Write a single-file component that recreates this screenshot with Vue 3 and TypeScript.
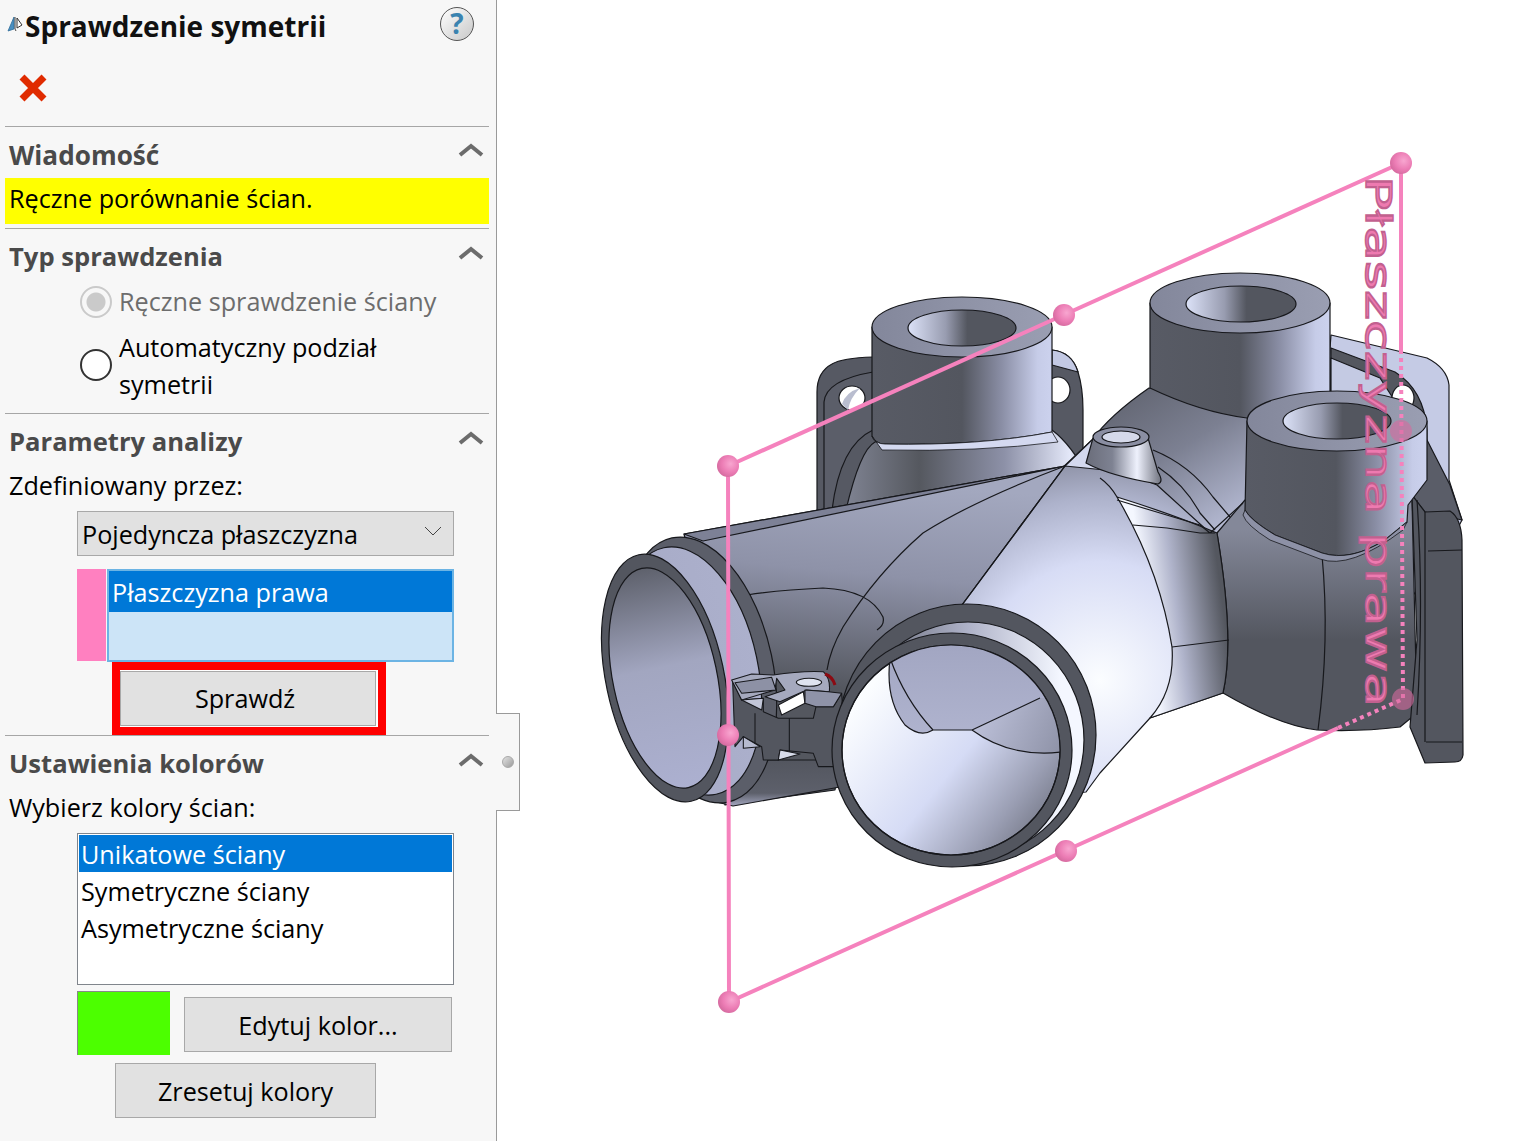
<template>
  <div class="app">
    <aside class="panel">
      <div class="head">
        <div class="title-row">
          <svg class="title-icon" viewBox="0 0 16 16" width="16" height="16">
            <path d="M7 1 L1 15 L7 13 Z" fill="#4a8fc0" stroke="#2e6c99" stroke-width="0.8" />
            <path d="M8 1 L8 13 L9 15" fill="none" stroke="#444" stroke-width="1" />
            <path d="M10 2 L15 9 L10 12 Z" fill="#fff" stroke="#333" stroke-width="1" />
          </svg>
          <h1 class="title">Sprawdzenie symetrii</h1>
          <span class="help">?</span>
        </div>
        <svg class="cancel" viewBox="0 0 28 28" width="28" height="28">
          <path d="M3 3 L25 25 M25 3 L3 25" stroke="#e02b00" stroke-width="7" />
        </svg>
      </div>

      <section class="sec">
        <div class="sec-head sec-head-a">
          <span>Wiadomość</span>
          <svg class="chev" viewBox="0 0 26 14" width="26" height="14"><path d="M2 12 L13 3 L24 12" /></svg>
        </div>
        <div class="msg">Ręczne porównanie ścian.</div>
      </section>

      <section class="sec sec-type">
        <div class="sec-head">
          <span>Typ sprawdzenia</span>
          <svg class="chev" viewBox="0 0 26 14" width="26" height="14"><path d="M2 12 L13 3 L24 12" /></svg>
        </div>
        <div class="radio-row disabled">
          <span class="radio on"></span>
          <span>Ręczne sprawdzenie ściany</span>
        </div>
        <div class="radio-row two">
          <span class="radio"></span>
          <span>Automatyczny podział<br />symetrii</span>
        </div>
      </section>

      <section class="sec">
        <div class="sec-head">
          <span>Parametry analizy</span>
          <svg class="chev" viewBox="0 0 26 14" width="26" height="14"><path d="M2 12 L13 3 L24 12" /></svg>
        </div>
        <div class="label">Zdefiniowany przez:</div>
        <div class="select">
          <span>Pojedyncza płaszczyzna</span>
          <svg viewBox="0 0 18 10" width="18" height="10"><path d="M1 1 L9 9 L17 1" fill="none" stroke="#444" stroke-width="1" /></svg>
        </div>
        <div class="plane-row">
          <div class="swatch-pink"></div>
          <div class="plane-list"><div class="plane-sel">Płaszczyzna prawa</div></div>
        </div>
        <div class="red-frame"><button class="btn btn-check">Sprawdź</button></div>
      </section>

      <section class="sec">
        <div class="sec-head">
          <span>Ustawienia kolorów</span>
          <svg class="chev" viewBox="0 0 26 14" width="26" height="14"><path d="M2 12 L13 3 L24 12" /></svg>
        </div>
        <div class="label">Wybierz kolory ścian:</div>
        <ul class="color-list">
          <li v-for="(item, i) in faceKinds" :key="item" :class="{ sel: i === 0 }">{{ item }}</li>
        </ul>
        <div class="color-row">
          <div class="swatch-green"></div>
          <button class="btn btn-edit">Edytuj kolor...</button>
        </div>
        <button class="btn btn-reset">Zresetuj kolory</button>
      </section>

      <div class="tab"><span class="tab-dot"></span></div>
    </aside>

    <main class="stage">
      <svg class="model" viewBox="497 0 1024 1141" width="1024" height="1141">
        <defs>
          <linearGradient id="cyl" x1="0" x2="1" y1="0" y2="0">
            <stop offset="0" stop-color="#585b65" />
            <stop offset="0.5" stop-color="#53565f" />
            <stop offset="0.72" stop-color="#8a8ea5" />
            <stop offset="0.92" stop-color="#c6cce8" />
            <stop offset="1" stop-color="#ccd2ee" />
          </linearGradient>
          <linearGradient id="face" x1="0" x2="1" y1="0" y2="0">
            <stop offset="0" stop-color="#83879b" />
            <stop offset="1" stop-color="#9a9eb2" />
          </linearGradient>
          <linearGradient id="hole" x1="0" x2="1" y1="0" y2="0">
            <stop offset="0" stop-color="#dce2f8" />
            <stop offset="0.35" stop-color="#989cb0" />
            <stop offset="0.55" stop-color="#53565f" />
            <stop offset="1" stop-color="#53565f" />
          </linearGradient>
          <linearGradient id="bulge" x1="0" x2="1" y1="0" y2="0">
            <stop offset="0" stop-color="#7f8392" />
            <stop offset="0.3" stop-color="#55585f" />
            <stop offset="0.65" stop-color="#8d91a8" />
            <stop offset="0.92" stop-color="#e4e8f9" />
            <stop offset="1" stop-color="#8d91a8" />
          </linearGradient>
          <linearGradient id="backBody" x1="0" x2="1" y1="0" y2="1">
            <stop offset="0" stop-color="#565963" />
            <stop offset="0.45" stop-color="#7c8092" />
            <stop offset="0.8" stop-color="#b4b9d2" />
            <stop offset="1" stop-color="#d0d5ea" />
          </linearGradient>
          <linearGradient id="trunk" gradientUnits="userSpaceOnUse" x1="880" y1="480" x2="860" y2="690">
            <stop offset="0" stop-color="#a3a8bf" />
            <stop offset="0.45" stop-color="#8e92a8" />
            <stop offset="1" stop-color="#54575f" />
          </linearGradient>
          <radialGradient id="shell" gradientUnits="userSpaceOnUse" cx="1100" cy="680" r="215">
            <stop offset="0" stop-color="#fbfdff" />
            <stop offset="0.55" stop-color="#d7dcf5" />
            <stop offset="0.85" stop-color="#adb2cb" />
            <stop offset="1" stop-color="#9296ab" />
          </radialGradient>
          <linearGradient id="shoulder" gradientUnits="userSpaceOnUse" x1="1150" y1="640" x2="1226" y2="630">
            <stop offset="0" stop-color="#f4f7ff" />
            <stop offset="0.4" stop-color="#b0b4cb" />
            <stop offset="1" stop-color="#54575f" />
          </linearGradient>
          <linearGradient id="lobe" gradientUnits="userSpaceOnUse" x1="1290" y1="530" x2="1290" y2="640">
            <stop offset="0" stop-color="#848899" />
            <stop offset="1" stop-color="#53565f" />
          </linearGradient>
          <linearGradient id="lowerTube" x1="0" x2="0" y1="0" y2="1">
            <stop offset="0" stop-color="#53565f" />
            <stop offset="0.72" stop-color="#5d606b" />
            <stop offset="1" stop-color="#a3a7bf" />
          </linearGradient>
          <linearGradient id="innerLeft" x1="0" x2="0" y1="0" y2="1">
            <stop offset="0" stop-color="#5e616c" />
            <stop offset="0.45" stop-color="#a2a6c0" />
            <stop offset="1" stop-color="#acb0d0" />
          </linearGradient>
          <linearGradient id="band" x1="0" x2="1" y1="0" y2="0">
            <stop offset="0" stop-color="#a6aac6" />
            <stop offset="1" stop-color="#acb0cc" />
          </linearGradient>
          <linearGradient id="frontBand" x1="0" x2="1" y1="0" y2="0">
            <stop offset="0" stop-color="#5c5f6b" />
            <stop offset="0.5" stop-color="#aeb2c8" />
            <stop offset="0.9" stop-color="#f4f7ff" />
            <stop offset="1" stop-color="#f4f7ff" />
          </linearGradient>
          <linearGradient id="frontHole" gradientUnits="userSpaceOnUse" x1="860" y1="700" x2="1060" y2="860">
            <stop offset="0" stop-color="#fbfdff" />
            <stop offset="0.45" stop-color="#d5dbf5" />
            <stop offset="0.72" stop-color="#9a9eb3" />
            <stop offset="1" stop-color="#575a64" />
          </linearGradient>
          <linearGradient id="frontIn" gradientUnits="userSpaceOnUse" x1="960" y1="645" x2="960" y2="740">
            <stop offset="0" stop-color="#a2a6c2" />
            <stop offset="1" stop-color="#b0b4cf" />
          </linearGradient>
          <linearGradient id="frontIn2" gradientUnits="userSpaceOnUse" x1="975" y1="710" x2="1060" y2="750">
            <stop offset="0" stop-color="#bfc3dc" />
            <stop offset="1" stop-color="#8f93a8" />
          </linearGradient>
          <linearGradient id="bossGrad" x1="0" x2="1" y1="0" y2="0">
            <stop offset="0" stop-color="#6a6d7a" />
            <stop offset="0.35" stop-color="#7e8292" />
            <stop offset="0.68" stop-color="#eef1fd" />
            <stop offset="1" stop-color="#70737f" />
          </linearGradient>
          <radialGradient id="ball" cx="0.62" cy="0.4" r="0.65">
            <stop offset="0" stop-color="#f8a6d0" />
            <stop offset="0.6" stop-color="#ec7db5" />
            <stop offset="1" stop-color="#d56a9f" />
          </radialGradient>
          <clipPath id="frontClip"><ellipse cx="951" cy="750" rx="109" ry="105" /></clipPath>
        </defs>

        <g stroke="#17181c" stroke-width="1.2" stroke-linejoin="round">
          <!-- back flange, left -->
          <path d="M817 520 L817 392 Q817 372 832 364 Q842 358 873 357 L1052 350 Q1072 352 1078 372 Q1083 388 1083 410 L1083 500 Z" fill="#565963" />
          <path d="M824 510 L824 402 Q826 380 873 372 L873 430 Q840 445 832 510 Z" fill="#5b5e69" />
          <path d="M1052 350 Q1072 352 1078 372 L1052 365 Z" fill="#c3c9e4" />
          <ellipse cx="852" cy="398" rx="13" ry="12" fill="#fff" />
          <path d="M842 404 Q846 392 860 388 Q850 398 848 410 Z" fill="#b9bdcf" stroke="none" />
          <ellipse cx="1058" cy="390" rx="12" ry="13" fill="#fff" />

          <!-- bulge under first pipe -->
          <path d="M846 510 Q860 450 875 442 L1052 430 Q1072 445 1090 480 L1090 520 Z" fill="url(#bulge)" />

          <!-- back flange, right -->
          <path d="M1331 335 L1427 358 Q1447 368 1449 385 L1449 480 L1462 520 L1420 600 L1320 480 Z" fill="#c5cbe5" />
          <path d="M1331 348 L1395 372 Q1424 390 1427 430 L1427 470 L1330 470 Z" fill="#54575f" />
          <path d="M1331 358 L1380 378 L1420 440 L1331 440 Z" fill="#c4cae3" />
          <ellipse cx="1403" cy="398" rx="11" ry="13" fill="#fff" />

          <!-- body behind the second pipe -->
          <path d="M1149 388 Q1110 415 1092 440 L1060 470 L1225 540 L1300 470 L1300 400 Z" fill="url(#backBody)" />

          <!-- second pipe -->
          <path d="M1150 303 L1150 388 Q1200 412 1247 418 L1330 400 L1330 303 Z" fill="url(#cyl)" />
          <ellipse cx="1240" cy="303" rx="90" ry="30" fill="url(#face)" />
          <ellipse cx="1241" cy="304" rx="55" ry="18" fill="url(#hole)" />

          <!-- first pipe -->
          <path d="M872 327 L872 436 Q875 444 885 444 Q980 446 1052 432 L1052 327 Z" fill="url(#cyl)" />
          <path d="M872 436 Q875 444 885 444 Q980 446 1052 432 L1058 442 Q980 452 882 450 Z" fill="#d4d9f0" stroke-width="0.8" />
          <ellipse cx="962" cy="327" rx="90" ry="30" fill="url(#face)" />
          <ellipse cx="962" cy="328" rx="54" ry="18" fill="url(#hole)" />

          <!-- right lobe -->
          <path d="M1217 533 L1245 500 L1412 500 L1417 713 L1400 727 Q1360 732 1317 730 Q1280 726 1223 693 Q1235 640 1217 533 Z" fill="url(#lobe)" />
          <path d="M1322 555 Q1330 640 1318 730" fill="none" />

          <!-- plate at the right -->
          <path d="M1427 440 L1450 485 L1462 520 L1425 512 L1412 495 Z" fill="#5a5d68" />
          <path d="M1412 495 L1425 512 L1450 511 Q1461 518 1462 540 L1463 755 Q1462 762 1455 762 L1425 763 L1410 727 L1417 640 Z" fill="#53565f" />
          <path d="M1428 551 L1462 550 M1426 742 L1462 742 M1425 512 L1425 742 M1417 500 Q1424 600 1417 715" fill="none" />

          <!-- third pipe -->
          <path d="M1247 421 L1245 510 Q1250 520 1275 535 L1322 553 Q1350 562 1385 540 L1407 522 L1408 505 L1427 480 L1427 421 Z" fill="url(#cyl)" />
          <path d="M1245 510 Q1250 520 1275 535 L1322 553 Q1350 562 1385 540 L1407 522 L1403 530 Q1350 570 1320 559 L1270 540 Q1246 525 1243 515 Z" fill="#8d91a6" stroke-width="0.8" />
          <ellipse cx="1337" cy="421" rx="90" ry="30" fill="url(#face)" />
          <ellipse cx="1337" cy="421" rx="54" ry="18" fill="url(#hole)" />

          <!-- shell and shoulder -->
          <path d="M684 534 L1065 466 L962 605 Q890 625 850 690 L835 790 L725 805 L700 600 Z" fill="url(#trunk)" />
          <path d="M1065 466 L1100 463 L1157 485 L1210 533 L1223 693 L1150 718 L1100 773 L1086 792 L1000 800 L962 605 Z" fill="url(#shell)" />
          <path d="M1117 497 Q1160 570 1172 647 Q1175 690 1150 718 L1223 693 Q1235 640 1217 533 Q1175 515 1117 497 Z" fill="url(#shoulder)" />
          <path d="M1172 647 L1229 640" fill="none" />
          <path d="M1100 478 Q1110 485 1117 497 M1117 500 L1150 510 L1200 525 L1210 533 L1243 503 M1133 525 L1167 528 L1200 533 L1215 533" fill="none" />
          <path d="M1153 450 Q1190 465 1213 497 L1230 517 M1158 467 Q1185 485 1200 513 L1215 530" fill="none" />
          <path d="M1065 466 L1092 440 L1105 470 Z" fill="#d3d8ee" />

          <!-- boss -->
          <path d="M1093 438 L1086 463 Q1110 476 1158 484 Q1164 482 1158 472 L1148 438 Z" fill="url(#bossGrad)" />
          <ellipse cx="1121" cy="437" rx="28" ry="10" fill="#8a8ea2" />
          <ellipse cx="1121" cy="437" rx="19" ry="6" fill="#d5d9ea" />

          <!-- strips and edges on the trunk -->
          <path d="M684 534 L1065 466 L703 541 Z" fill="#7d8196" />
          <path d="M1065 466 L962 605" fill="none" />
          <path d="M1065 466 Q975 500 923 533 Q877 573 843 627 Q830 650 827 670" fill="none" />
          <path d="M747 595 Q780 590 823 588 Q870 590 883 617 Q885 625 877 630" fill="none" />

          <!-- lower part of left tube -->
          <path d="M700 798 L733 806 L840 787 L840 760 L740 760 Z" fill="url(#lowerTube)" />

          <!-- left opening -->
          <ellipse cx="700" cy="670" rx="73" ry="135" transform="rotate(-12 700 670)" fill="#5b5e69" />
          <ellipse cx="690" cy="671" rx="68" ry="126" transform="rotate(-12 690 671)" fill="url(#band)" />
          <ellipse cx="665" cy="678" rx="59" ry="126" transform="rotate(-12 665 678)" fill="#53565f" />
          <ellipse cx="665" cy="678" rx="52" ry="112" transform="rotate(-12 665 678)" fill="url(#innerLeft)" />

          <!-- clip between the openings -->
          <g transform="translate(710 650) scale(0.3333)" stroke-width="3.2">
            <path d="M68 95 L95 150 L160 145 L160 185 L205 205 L310 205 L318 170 L370 170 L395 130 L410 350 L325 350 L310 310 L210 300 L205 330 L160 330 L155 290 L100 260 L75 290 Z" fill="#53565f" />
            <path d="M65 90 L125 72 L190 75 Q270 62 340 65 Q362 85 358 125 L290 120 L210 155 L165 140 L225 120 L200 85 L195 120 L95 150 Z" fill="#a5a9be" />
            <path d="M75 98 L185 82 L198 120 L95 130 Z" fill="#8d91a5" />
            <path d="M95 150 L160 145 L155 180 Z" fill="#c2c6d8" />
            <ellipse cx="297" cy="97" rx="38" ry="12" fill="#dfe3f0" />
            <path d="M205 165 L280 125 L285 160 L215 195 Z" fill="#fff" />
            <path d="M285 120 L355 125 L395 130 L370 170 L318 170 L285 160 Z" fill="#8f93a8" />
            <path d="M100 260 L150 290 L100 295 Z" fill="#b7bbd0" />
            <path d="M205 330 L210 300 L270 312 Z" fill="#d7dbe9" />
            <path d="M135 190 L135 280 M238 205 L238 305" fill="none" />
            <path d="M345 72 Q368 80 375 105" fill="none" stroke="#8c0a12" stroke-width="9" />
          </g>

          <!-- front opening -->
          <ellipse cx="967" cy="735" rx="129" ry="131" fill="#53565f" />
          <ellipse cx="968" cy="740" rx="116" ry="118" fill="url(#frontBand)" />
          <ellipse cx="952" cy="750" rx="120" ry="117" fill="#53565f" />
          <ellipse cx="951" cy="750" rx="109" ry="105" fill="url(#frontHole)" />
          <g clip-path="url(#frontClip)">
            <path d="M890 640 L890 658 Q885 700 905 725 Q920 738 933 730 L972 730 L1040 698 L1090 698 L1090 640 Z" fill="url(#frontIn)" stroke="none" />
            <path d="M972 730 L1040 698 L1090 698 L1090 752 L1062 752 Q1010 758 972 730 Z" fill="url(#frontIn2)" stroke="none" />
            <path d="M890 658 Q885 700 905 725 Q920 738 933 730 L972 730 L1040 698 M972 730 Q1010 758 1062 752 M890 658 Q905 700 933 730" fill="none" />
          </g>
          <ellipse cx="951" cy="750" rx="109" ry="105" fill="none" />
        </g>

        <!-- sketch plane -->
        <g class="plane-lines" fill="none">
          <path d="M1401 350 L1403 699 L1338 728" stroke-dasharray="4 4" />
          <path d="M1401 163 L1401 350" />
          <path d="M728 466 L1401 163" />
          <path d="M728 466 L729 1002 L1338 728" />
        </g>
        <text class="plane-text" x="0" y="0" textLength="531" lengthAdjust="spacingAndGlyphs" transform="translate(1366 176) rotate(90)">Płaszczyzna prawa</text>
        <circle v-for="p in solidBalls" :key="p[0]" :cx="p[0]" :cy="p[1]" r="11" fill="url(#ball)" />
        <circle v-for="p in ghostBalls" :key="p[0]" :cx="p[0]" :cy="p[1]" r="11" fill="#d56a9f" opacity="0.6" />
      </svg>
    </main>
  </div>
</template>

<script setup lang="ts">
const faceKinds: string[] = ['Unikatowe ściany', 'Symetryczne ściany', 'Asymetryczne ściany']

const solidBalls: number[][] = [
  [1401, 163],
  [1064, 315],
  [728, 466],
  [728, 735],
  [729, 1002],
  [1066, 851],
]
const ghostBalls: number[][] = [
  [1401, 431],
  [1403, 699],
]
</script>

<style>
html,
body {
  margin: 0;
  background: #fff;
}
</style>

<style scoped>
.app {
  display: flex;
  width: 1521px;
  height: 1141px;
  overflow: hidden;
  font-family: "Open Sans", "Noto Sans", sans-serif;
  font-size: 25.2px;
  color: #000;
}
.panel {
  position: relative;
  width: 497px;
  height: 1141px;
  flex: none;
  box-sizing: border-box;
  padding-left: 5px;
  padding-right: 7px;
  background: #f7f7f7;
  border-right: 1px solid #9a9a9a;
}
.head {
  height: 126px;
}
.title-row {
  display: flex;
  align-items: center;
  height: 50px;
  padding-top: 2px;
  box-sizing: border-box;
}
.title-icon {
  margin: 0 2px 4px 2px;
}
.title {
  margin: 0;
  font-size: 28px;
  font-weight: 700;
  color: #111;
}
.help {
  width: 34px;
  height: 34px;
  margin-left: auto;
  margin-right: 15px;
  margin-bottom: 4px;
  box-sizing: border-box;
  border: 1px solid #555;
  border-radius: 50%;
  background: linear-gradient(135deg, #fff, #c8c8c8);
  color: #3a83b0;
  font-size: 28px;
  font-weight: 700;
  line-height: 31px;
  text-align: center;
}
.cancel {
  display: block;
  margin: 24px 0 0 14px;
}
.sec {
  border-top: 1px solid #a6a6a6;
}
.sec-head {
  display: flex;
  align-items: center;
  justify-content: space-between;
  height: 54px;
  padding: 0 5px 0 4px;
  box-sizing: border-box;
  font-size: 25.6px;
  font-weight: 700;
  color: #4a4a4a;
}
.sec-head-a {
  height: 51px;
  padding-top: 4px;
  font-size: 26.2px;
}
.chev {
  margin-bottom: 6px;
}
.sec-head-a .chev {
  margin-bottom: 10px;
}
.chev path {
  fill: none;
  stroke: #6c6c6c;
  stroke-width: 4;
}
.msg {
  height: 46px;
  margin-bottom: 4px;
  padding-left: 4px;
  background: #ffff00;
  line-height: 41px;
}
.sec-type {
  height: 185px;
  box-sizing: border-box;
}
.radio-row {
  display: flex;
  align-items: center;
  gap: 7px;
  padding-left: 75px;
  line-height: 37px;
}
.radio-row.disabled {
  height: 37px;
  margin-bottom: 9px;
  color: #6d6d6d;
}
.radio-row.two .radio {
  margin-bottom: 2px;
}
.radio {
  display: block;
  flex: none;
  width: 32px;
  height: 32px;
  box-sizing: border-box;
  border: 2px solid #333;
  border-radius: 50%;
  background: #fff;
}
.radio.on {
  border-color: #cacaca;
  background: radial-gradient(circle, #cacaca 0 9px, #f7f7f7 10px);
}
.label {
  height: 37px;
  padding-left: 4px;
  line-height: 35px;
}
.select {
  display: flex;
  align-items: center;
  justify-content: space-between;
  width: 377px;
  height: 45px;
  margin: 6px 0 0 72px;
  padding: 0 11px 0 4px;
  box-sizing: border-box;
  border: 1px solid #a8a8a8;
  background: #e1e1e1;
}
.select svg {
  margin-bottom: 5px;
}
.plane-row {
  display: flex;
  height: 93px;
  margin: 13px 0 0 72px;
}
.swatch-pink {
  width: 29px;
  height: 92px;
  background: #ff80c0;
}
.plane-list {
  width: 347px;
  margin-left: 1px;
  box-sizing: border-box;
  border: 2px solid #6cb4e4;
  background: #cce4f7;
}
.plane-sel {
  height: 41px;
  padding-left: 3px;
  background: #0078d7;
  color: #fff;
  line-height: 42px;
}
.btn {
  display: block;
  padding: 0;
  box-sizing: border-box;
  border: 1px solid #a8a8a8;
  background: #e1e1e1;
  font: inherit;
  color: #000;
}
.red-frame {
  width: 274px;
  height: 73px;
  margin-left: 107px;
  box-sizing: border-box;
  border: 8px solid #ff0000;
  background: #fff;
}
.btn-check {
  width: 256px;
  height: 55px;
  margin-top: 1px;
  padding: 0 6px 2px 0;
}
.color-list {
  width: 377px;
  height: 152px;
  margin: 6px 0 0 72px;
  padding: 1px;
  box-sizing: border-box;
  border: 1px solid #80858c;
  background: #fff;
  list-style: none;
}
.color-list li {
  height: 37px;
  padding-left: 2px;
  line-height: 39px;
}
.color-list li.sel {
  background: #0078d7;
  color: #fff;
}
.color-row {
  display: flex;
  align-items: flex-start;
  margin: 6px 0 0 72px;
}
.swatch-green {
  width: 93px;
  height: 64px;
  box-sizing: border-box;
  border-top: 1px solid #888;
  border-left: 1px solid #888;
  background: #4cff00;
}
.btn-edit {
  width: 268px;
  height: 55px;
  margin: 6px 0 0 14px;
}
.btn-reset {
  width: 261px;
  height: 55px;
  margin: 8px 0 0 110px;
}
.tab {
  position: absolute;
  top: 713px;
  left: 496px;
  display: flex;
  align-items: center;
  justify-content: center;
  width: 24px;
  height: 98px;
  box-sizing: border-box;
  border: 1px solid #9a9a9a;
  border-left: none;
  background: #f7f7f7;
}
.tab-dot {
  width: 12px;
  height: 12px;
  border-radius: 50%;
  background: linear-gradient(135deg, #e2e2e2, #9c9c9c);
  border: 1px solid #a8a8a8;
  box-sizing: border-box;
}
.stage {
  flex: 1;
  background: #fff;
}
.model {
  display: block;
}
.plane-lines path {
  stroke: #f582bd;
  stroke-width: 4;
}
.plane-text {
  font-family: "DejaVu Sans", sans-serif;
  font-size: 36px;
  fill: #ee7ab0;
  stroke: #c2608f;
  stroke-width: 1.5;
}
</style>
